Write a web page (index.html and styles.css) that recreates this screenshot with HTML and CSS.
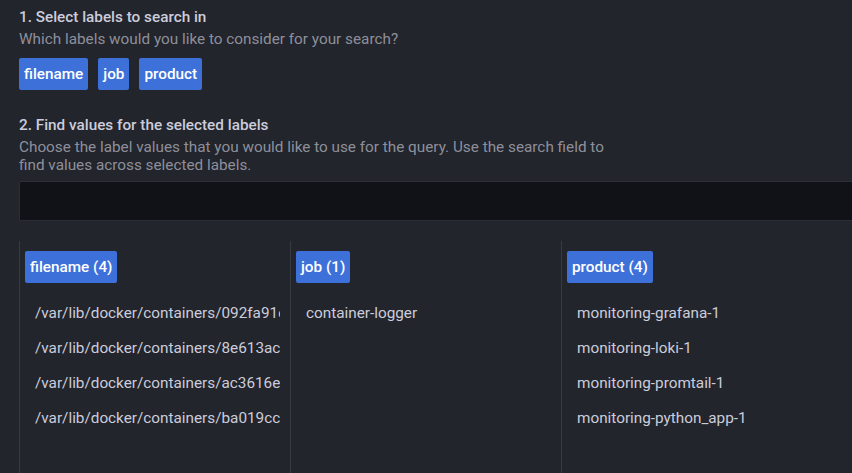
FILE: index.html
```html
<!DOCTYPE html>
<html>
<head>
<meta charset="utf-8">
<link rel="stylesheet" href="styles.css">
</head>
<body>
<div class="page">
  <section class="step">
    <div class="title">1. Select labels to search in</div>
    <div class="desc">Which labels would you like to consider for your search?</div>
    <div class="chips">
      <span class="chip">filename</span>
      <span class="chip">job</span>
      <span class="chip">product</span>
    </div>
  </section>
  <section class="step step2">
    <div class="title">2. Find values for the selected labels</div>
    <div class="desc desc-wrap">Choose the label values that you would like to use for the query. Use the search field to find values across selected labels.</div>
    <div class="search"></div>
    <div class="columns">
      <div class="col">
        <span class="chip">filename (4)</span>
        <ul class="values">
          <li>/var/lib/docker/containers/092fa91c3e7b1d2a/092fa91c3e7b1d2a-json.log</li>
          <li>/var/lib/docker/containers/8e613ac4f0d9b2e1/8e613ac4f0d9b2e1-json.log</li>
          <li>/var/lib/docker/containers/ac3616e7b5a2c9d0/ac3616e7b5a2c9d0-json.log</li>
          <li>/var/lib/docker/containers/ba019cc2d8e4f6a3/ba019cc2d8e4f6a3-json.log</li>
        </ul>
      </div>
      <div class="col">
        <span class="chip">job (1)</span>
        <ul class="values">
          <li>container-logger</li>
        </ul>
      </div>
      <div class="col">
        <span class="chip">product (4)</span>
        <ul class="values">
          <li>monitoring-grafana-1</li>
          <li>monitoring-loki-1</li>
          <li>monitoring-promtail-1</li>
          <li>monitoring-python_app-1</li>
        </ul>
      </div>
    </div>
  </section>
</div>
</body>
</html>
```

FILE: styles.css
```css
html, body {
  margin: 0;
  padding: 0;
  background: #22252b;
  overflow: hidden;
  height: 100%;
}
body {
  font-family: Roboto, "Liberation Sans", sans-serif;
  font-size: 15.3px;
  color: #ccccdc;
}
.page {
  padding: 8px 0 0 19px;
  width: 960px;
}
.title {
  font-weight: 500;
  line-height: 18px;
  color: #ccccdc;
}
.desc {
  margin-top: 4px;
  line-height: 18px;
  color: rgba(204, 204, 220, 0.65);
}
.desc-wrap {
  width: 600px;
  line-height: 18.3px;
}
.chips {
  display: flex;
  gap: 10px;
  margin-top: 10px;
}
.chip {
  display: inline-block;
  background: #3d71d9;
  color: #fff;
  font-weight: 500;
  line-height: 18px;
  padding: 7px 5px;
  border-radius: 2px;
}
.step2 {
  margin-top: 26px;
}
.search {
  margin-top: 6px;
  height: 40px;
  box-sizing: border-box;
  background: #111217;
  border: 1px solid #2c2e35;
  border-radius: 2px;
}
.columns {
  display: flex;
  margin-top: 20px;
  height: 240px;
}
.col {
  width: 271px;
  box-sizing: border-box;
  border-left: 1px solid #393b42;
  padding: 10px 10px 0 5px;
  overflow: hidden;
}
.values {
  list-style: none;
  margin: 13px 0 0 0;
  padding: 0;
}
.values li {
  height: 35px;
  line-height: 35px;
  padding-left: 10px;
  white-space: nowrap;
  overflow: hidden;
  color: #ccccdc;
}
```
